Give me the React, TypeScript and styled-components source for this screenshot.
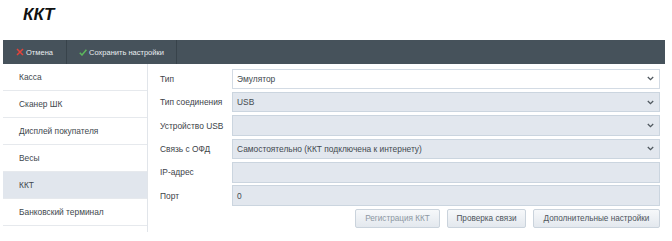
import React from "react";
import styled, { createGlobalStyle } from "styled-components";

const Global = createGlobalStyle`
  html, body { margin: 0; padding: 0; background: #ffffff; }
  body { font-family: "Liberation Sans", Arial, sans-serif; color: #333; }
  * { box-sizing: border-box; }
`;

const Page = styled.div`
  width: 672px;
  height: 241px;
  overflow: hidden;
  background: #fff;
`;

const Header = styled.h1`
  margin: 0;
  height: 40px;
  padding: 6px 0 0 23px;
  font-family: "Liberation Sans", Arial, sans-serif;
  font-size: 17px;
  line-height: 17px;
  font-weight: 700;
  font-style: italic;
  color: #111;
`;

const Toolbar = styled.div`
  margin-left: 3px;
  width: 662px;
  height: 24px;
  display: flex;
  align-items: stretch;
  background: #46525b;
`;

const ToolButton = styled.div<{ $w: number }>`
  width: ${(p) => p.$w}px;
  display: flex;
  align-items: center;
  justify-content: center;
  gap: 2px;
  border-right: 1px solid #38434b;
  color: #e9edf0;
  font-size: 7.5px;
  white-space: nowrap;
`;

const Body = styled.div`
  margin-left: 3px;
  width: 662px;
  display: flex;
  align-items: stretch;
`;

const Sidebar = styled.div`
  width: 145px;
  border-right: 1px solid #e1e5ea;
  display: flex;
  flex-direction: column;
`;

const NavItem = styled.div<{ $active?: boolean }>`
  height: 27px;
  display: flex;
  align-items: center;
  padding-left: 16px;
  font-size: 8.4px;
  color: #40474d;
  background: ${(p) => (p.$active ? "#e1e6ed" : "#fff")};
  border-bottom: 1px solid #e6e9ed;
`;

const Content = styled.div`
  flex: 1;
  padding: 4.5px 5px 3.5px 12px;
  display: flex;
  flex-direction: column;
`;

const Form = styled.div`
  display: grid;
  grid-template-columns: 72px 1fr;
  grid-auto-rows: 20.5px;
  row-gap: 2.9px;
`;

const Label = styled.div`
  display: flex;
  align-items: center;
  font-size: 8.4px;
  color: #3d4349;
  white-space: nowrap;
`;

const Field = styled.div<{ $disabled?: boolean }>`
  display: flex;
  align-items: center;
  justify-content: space-between;
  padding: 0 5px 0 4px;
  font-size: 8.4px;
  color: #434a50;
  background: ${(p) => (p.$disabled ? "#e2e7ee" : "#ffffff")};
  border: 1px solid ${(p) => (p.$disabled ? "#cbd5df" : "#d3dbe4")};
  white-space: nowrap;
`;

const Buttons = styled.div`
  margin-top: 3px;
  display: flex;
  justify-content: flex-end;
  gap: 7px;
`;

const Button = styled.div<{ $disabled?: boolean; $w: number }>`
  width: ${(p) => p.$w}px;
  height: 19.5px;
  display: flex;
  align-items: center;
  justify-content: center;
  font-size: 8.2px;
  color: ${(p) => (p.$disabled ? "#8d98a3" : "#4d555c")};
  background: linear-gradient(#f6f8fa, #e3e8ee);
  border: 1px solid #cad3dc;
  border-radius: 2px;
  white-space: nowrap;
`;

const Chevron = () => (
  <svg width="7" height="5" viewBox="0 0 7 5">
    <polyline points="0.8,1 3.5,3.6 6.2,1" fill="none" stroke="#4f575e" strokeWidth="1.3" />
  </svg>
);

const CrossIcon = () => (
  <svg width="8" height="8" viewBox="0 0 8 8">
    <path d="M1 1 L7 7 M7 1 L1 7" stroke="#e5433a" strokeWidth="1.5" />
  </svg>
);

const CheckIcon = () => (
  <svg width="8" height="7" viewBox="0 0 8 7">
    <path d="M0.8 3.8 L3 6 L7.4 0.8" fill="none" stroke="#5cb85c" strokeWidth="1.5" />
  </svg>
);

const nav = ["Касса", "Сканер ШК", "Дисплей покупателя", "Весы", "ККТ", "Банковский терминал"];

const rows: { label: string; value: string; disabled: boolean; select: boolean }[] = [
  { label: "Тип", value: "Эмулятор", disabled: false, select: true },
  { label: "Тип соединения", value: "USB", disabled: true, select: true },
  { label: "Устройство USB", value: "", disabled: true, select: true },
  { label: "Связь с ОФД", value: "Самостоятельно (ККТ подключена к интернету)", disabled: true, select: true },
  { label: "IP-адрес", value: "", disabled: true, select: false },
  { label: "Порт", value: "0", disabled: true, select: false },
];

export default function App() {
  return (
    <Page>
      <Global />
      <Header>ККТ</Header>
      <Toolbar>
        <ToolButton $w={64}>
          <CrossIcon />
          Отмена
        </ToolButton>
        <ToolButton $w={110}>
          <CheckIcon />
          Сохранить настройки
        </ToolButton>
      </Toolbar>
      <Body>
        <Sidebar>
          {nav.map((n) => (
            <NavItem key={n} $active={n === "ККТ"}>
              {n}
            </NavItem>
          ))}
        </Sidebar>
        <Content>
          <Form>
            {rows.map((r) => (
              <React.Fragment key={r.label}>
                <Label>{r.label}</Label>
                <Field $disabled={r.disabled}>
                  <span>{r.value}</span>
                  {r.select && <Chevron />}
                </Field>
              </React.Fragment>
            ))}
          </Form>
          <Buttons>
            <Button $disabled $w={85}>Регистрация ККТ</Button>
            <Button $w={79}>Проверка связи</Button>
            <Button $w={127}>Дополнительные настройки</Button>
          </Buttons>
        </Content>
      </Body>
    </Page>
  );
}
